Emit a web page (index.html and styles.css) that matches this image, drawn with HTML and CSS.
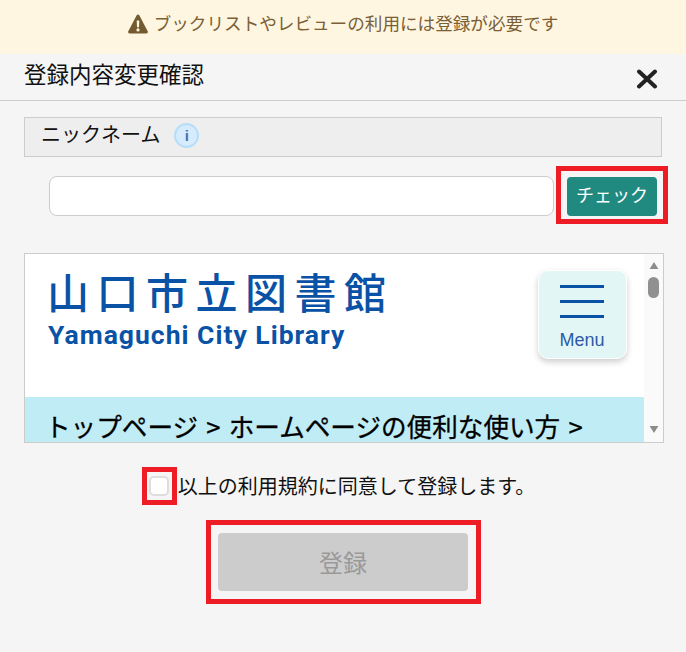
FILE: index.html
```html
<!DOCTYPE html>
<html lang="ja">
<head>
<meta charset="utf-8">
<title>登録内容変更確認</title>
<link rel="stylesheet" href="styles.css">
</head>
<body>
<div class="notice">
  <svg class="notice-icon" viewBox="0 0 20 20" width="20" height="20" aria-hidden="true"><path class="warn-fill" fill-rule="evenodd" d="M10 .5c.6 0 1 .3 1.3.8l8.4 16c.5 1-.1 2.2-1.3 2.2H1.600C.4 19.500-.2 18.300.3 17.300l8.400-16C9 .8 9.400.5 10 .5ZM8.700 6.500l.3 6.800h2l.3-6.800H8.700ZM10 14.300a1.600 1.600 0 1 0 0 3.200 1.600 1.600 0 0 0 0-3.200Z"/></svg>
  <span class="notice-text">ブックリストやレビューの利用には登録が必要です</span>
</div>
<header class="head">
  <h1 class="title">登録内容変更確認</h1>
  <svg class="close" viewBox="0 0 22 20" width="22" height="20" aria-hidden="true"><path d="M3 2.500 19 17.500M19 2.500 3 17.500"/></svg>
</header>
<main class="content">
  <div class="label-bar">
    <span class="label-text">ニックネーム</span>
    <span class="info">i</span>
  </div>
  <div class="nick-row">
    <input class="nick-input" type="text" aria-label="ニックネーム">
    <button class="check-btn marked marked-check" type="button"><span class="check-text">チェック</span></button>
  </div>
  <div class="terms">
    <div class="terms-page">
      <div class="logo-row">
        <div class="logo">
          <div class="logo-ja">山口市立図書館</div>
          <div class="logo-en">Yamaguchi City Library</div>
        </div>
        <div class="menu-btn">
          <span class="bar"></span><span class="bar"></span><span class="bar"></span>
          <span class="menu-text">Menu</span>
        </div>
      </div>
      <div class="crumb">トップページ &gt; ホームページの便利な使い方 &gt;</div>
    </div>
    <div class="scrollbar">
      <svg viewBox="0 0 10 8" width="10" height="7" aria-hidden="true"><path class="sb-arrow" d="M5 0 10 8H0Z"/></svg>
      <span class="thumb"></span>
      <svg class="arrow-down" viewBox="0 0 10 8" width="10" height="7" aria-hidden="true"><path class="sb-arrow" d="M0 0H10L5 8Z"/></svg>
    </div>
  </div>
  <label class="agree">
    <span class="box-wrap marked marked-box"><span class="box"></span></span>
    <span>以上の利用規約に同意して登録します。</span>
  </label>
  <div class="submit-row">
    <button class="submit marked marked-submit" type="button">登録</button>
  </div>
</main>
</body>
</html>
```
FILE: styles.css
```css
* { box-sizing: border-box; }
html, body { margin: 0; padding: 0; }
body {
  width: 686px;
  height: 652px;
  overflow: hidden;
  background: #f5f5f5;
  color: #111;
  font-family: "Noto Sans CJK JP", "Noto Sans", sans-serif;
}
.notice {
  height: 54px;
  background: #fff6e2;
  color: #7a6034;
  font-size: 17.6px;
  display: flex;
  align-items: center;
  justify-content: center;
  gap: 6px;
  padding-bottom: 4px;
}
.notice-text { line-height: 26px; margin-top: -4px; }
.notice-icon { margin-top: -2px; }
.warn-fill { fill: #735a30; }
.head {
  height: 47px;
  border-bottom: 1px solid #ccc;
  padding: 0 28px 0 24px;
  display: flex;
  justify-content: space-between;
  align-items: center;
}
.title {
  margin: 0 0 9px;
  font-size: 22.5px;
  font-weight: 400;
  line-height: 32px;
}
.close { margin-top: 3px; }
.close path { stroke: #222; stroke-width: 4; fill: none; stroke-linecap: round; }
.content { padding: 16px 22px 0 24px; }
.label-bar {
  height: 40px;
  width: 638px;
  border: 1px solid #ccc;
  background: #eee;
  padding: 0 0 3px 16px;
  font-size: 20px;
  display: flex;
  align-items: center;
  gap: 13px;
}
.label-text { line-height: 28px; margin-top: -4px; }
.info {
  width: 25px;
  height: 25px;
  border-radius: 50%;
  background: #d6ecfd;
  border: 2px solid #b4defa;
  color: #4a70b0;
  font: 700 15px/21px "Liberation Sans", sans-serif;
  text-align: center;
  margin-left: 1px;
}
.nick-row {
  display: flex;
  align-items: flex-start;
  gap: 13px;
  margin: 19px 0 0 25px;
}
.nick-input {
  width: 505px;
  height: 40px;
  border: 1px solid #ccc;
  border-radius: 8px;
  background: #fff;
}
.check-btn {
  width: 90px;
  height: 39px;
  margin-top: 1px;
  border: 0;
  border-radius: 4px;
  background: #218a80;
  color: #fff;
  font-family: inherit;
  font-size: 18px;
  padding: 0 0 6px;
}
.check-text { display: block; line-height: 26px; }
.marked { position: relative; }
.marked::after {
  content: "";
  position: absolute;
  border: 5px solid #ee1c25;
  pointer-events: none;
}
.marked-check::after { inset: -11px -11px -8px -11px; }
.marked-box::after { inset: -9px -8px -9px -7px; }
.marked-submit::after { inset: -13px -13px -13px -12px; }
.terms {
  width: 640px;
  height: 190px;
  margin-top: 37px;
  border: 1px solid #ccc;
  background: #fff;
  display: flex;
  overflow: hidden;
}
.terms-page {
  width: 619px;
  display: flex;
  flex-direction: column;
  justify-content: space-between;
}
.logo-row {
  display: flex;
  justify-content: space-between;
  padding: 16px 17px 0 22px;
}
.logo { color: #0a52a5; }
.logo-ja {
  font-size: 42px;
  line-height: 46px;
  font-weight: 500;
  letter-spacing: 7.5px;
  white-space: nowrap;
  margin-top: -2px;
}
.logo-en {
  font-family: Roboto, "Noto Sans", sans-serif;
  font-size: 26.5px;
  font-weight: 700;
  line-height: 30px;
  letter-spacing: 1px;
  white-space: nowrap;
  margin: 6px 0 0 1px;
}
.menu-btn {
  width: 89px;
  height: 89px;
  border-radius: 10px;
  background: #e2f6f5;
  border: 1px solid #fff;
  box-shadow: 0 3px 6px rgba(0, 0, 0, .2);
  display: flex;
  flex-direction: column;
  align-items: center;
  padding: 14px 1px 0 0;
  gap: 12px;
}
.bar { display: block; width: 44px; height: 3px; background: #0a52a5; flex: none; }
.menu-text {
  font: 18px/20px "Liberation Sans", Arial, sans-serif;
  color: #2c5aa8;
}
.crumb {
  height: 45px;
  background: #c0ecf5;
  padding: 13px 0 0 20px;
  font-size: 25.6px;
  line-height: 32px;
  word-spacing: 2.5px;
  color: #000;
  white-space: nowrap;
  -webkit-text-stroke: .3px #000;
}
.scrollbar {
  width: 19px;
  background: #fafafa;
  display: flex;
  flex-direction: column;
  align-items: center;
  padding: 8px 0 9px;
}
.sb-arrow { fill: #8c8c8c; }
.thumb {
  width: 11px;
  height: 21px;
  border-radius: 6px;
  background: #909090;
  margin-top: 8px;
}
.arrow-down { margin-top: auto; }
.agree {
  display: flex;
  justify-content: center;
  align-items: center;
  margin: 29px 0 0;
  gap: 9px;
  font-size: 20px;
  line-height: 28px;
  height: 28px;
  padding-right: 4px;
}
.box-wrap { display: block; width: 20px; height: 20px; }
.box {
  display: block;
  width: 20px;
  height: 20px;
  background: #fff;
  border: 2px solid #ddd;
  border-radius: 5px;
}
.submit-row {
  display: flex;
  justify-content: center;
  margin-top: 33px;
  padding-right: 2px;
}
.submit {
  width: 250px;
  height: 58px;
  border: 0;
  border-radius: 4px;
  background: #ccc;
  color: #999;
  font-family: inherit;
  font-size: 24px;
  padding: 0 0 2px;
}
```
